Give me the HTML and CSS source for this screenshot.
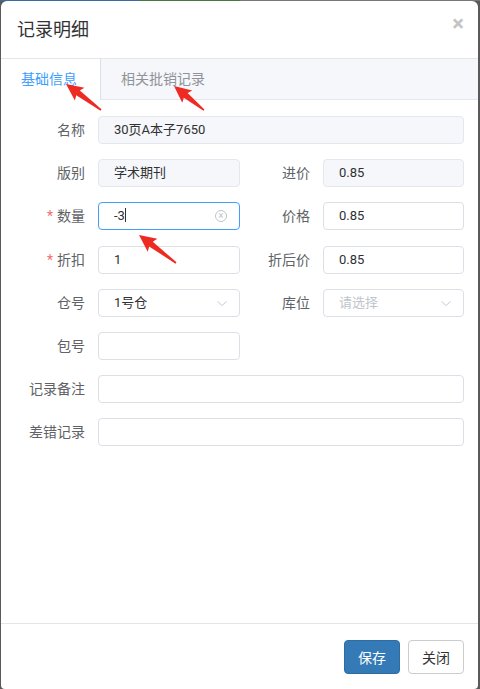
FILE: index.html
```html
<!DOCTYPE html>
<html lang="zh-CN">
<head>
    <meta charset="UTF-8">
    <meta name="viewport" content="width=device-width, initial-scale=1.0">
    <title>记录明细</title>
    <link rel="stylesheet" href="styles.css">
</head>
<body>

<div class="strip">
    <span class="strip-blue"></span>
    <span class="strip-green"></span>
    <span class="strip-grey"></span>
</div>

<div class="modal">
    <div class="modal-header">
        <h4 class="modal-title">记录明细</h4>
        <span class="close">&times;</span>
    </div>

    <div class="tabs">
        <div class="tab active">基础信息</div>
        <div class="tab">相关批销记录</div>
    </div>

    <div class="modal-body">
        <form class="record-form">
            <label class="lbl">名称</label>
            <div class="field disabled wide">30页A本子7650</div>

            <label class="lbl">版别</label>
            <div class="field disabled">学术期刊</div>
            <label class="lbl">进价</label>
            <div class="field disabled">0.85</div>

            <label class="lbl"><i class="req">*</i>数量</label>
            <div class="field focus">-3<span class="caret"></span>
                <span class="clear">&times;</span>
            </div>
            <label class="lbl">价格</label>
            <div class="field">0.85</div>

            <label class="lbl"><i class="req">*</i>折扣</label>
            <div class="field">1</div>
            <label class="lbl">折后价</label>
            <div class="field">0.85</div>

            <label class="lbl">仓号</label>
            <div class="field select">1号仓
                <svg class="chev" viewBox="0 0 12 8"><path d="M1 1.5 L6 6.5 L11 1.5" fill="none" stroke="#c0c4cc" stroke-width="1.1"/></svg>
            </div>
            <label class="lbl">库位</label>
            <div class="field select placeholder">请选择
                <svg class="chev" viewBox="0 0 12 8"><path d="M1 1.5 L6 6.5 L11 1.5" fill="none" stroke="#c0c4cc" stroke-width="1.1"/></svg>
            </div>

            <label class="lbl">包号</label>
            <div class="field"></div>
            <span class="blank"></span>

            <label class="lbl">记录备注</label>
            <div class="field wide"></div>

            <label class="lbl">差错记录</label>
            <div class="field wide"></div>
        </form>
    </div>

    <div class="modal-footer">
        <button class="btn btn-primary" type="button">保存</button>
        <button class="btn btn-default" type="button">关闭</button>
    </div>
</div>

<!-- red annotation arrows drawn on top of the screenshot -->
<svg class="marks" width="480" height="689" viewBox="0 0 480 689">
    <g fill="#ee2b22">
        <path transform="translate(66 84) rotate(36.6)" d="M0 0 L17 -8 L15 -3 L43.6 -0.8 L43.6 0.8 L15 3 L17 8 Z"/>
        <path transform="translate(174 86) rotate(38.7)" d="M0 0 L17 -8 L15 -3 L38.4 -0.8 L38.4 0.8 L15 3 L17 8 Z"/>
        <path transform="translate(139 235) rotate(37.1)" d="M0 0 L17 -8 L15 -3 L46.4 -0.8 L46.4 0.8 L15 3 L17 8 Z"/>
    </g>
</svg>

</body>
</html>
```

FILE: styles.css
```css
body {
    margin: 0;
    background-color: #5a5a5a;
    font-family: Roboto, "Helvetica Neue", "Noto Sans CJK SC", sans-serif;
    position: relative;
    width: 480px;
    height: 689px;
    overflow: hidden;
}
.strip {
    display: flex;
    height: 1px;
}
.strip-blue { width: 140px; background-color: #3d6aa0; }
.strip-green { width: 100px; background-color: #4a7a3a; }
.strip-grey { flex: 1; background-color: #777; }

.modal {
    margin-left: 1px;
    width: 477px;
    height: 688px;
    background-color: #fff;
    border-radius: 6px 6px 4px 4px;
    display: flex;
    flex-direction: column;
}
.modal-header {
    height: 57px;
    border-bottom: 1px solid #e5e5e5;
    display: flex;
    align-items: center;
    justify-content: space-between;
    padding: 0 14px 0 16px;
}
.modal-title {
    margin: 0 0 4px;
    font-size: 18px;
    font-weight: normal;
    color: #333;
}
.close {
    font-size: 22px;
    font-weight: bold;
    color: #c4c4c4;
    margin-top: -12px;
}

.tabs {
    display: flex;
    height: 40px;
    background-color: #f5f7fa;
    border-bottom: 1px solid #e4e7ed;
}
.tab {
    font-size: 14px;
    color: #909399;
    line-height: 40px;
    padding: 0 20px;
}
.tab.active {
    width: 59px;
    background-color: #fff;
    color: #409eff;
    border-right: 1px solid #dcdfe6;
    height: 41px;
}

.modal-body {
    flex: 1;
    padding: 16px 14px 0 0;
}
.record-form {
    display: grid;
    grid-template-columns: 97px 142px 83px 1fr;
    grid-auto-rows: 28px;
    row-gap: 15.2px;
}
.lbl {
    font-size: 14px;
    color: #606266;
    text-align: right;
    line-height: 28px;
    padding-right: 13px;
}
.req {
    font-style: normal;
    color: #f56c6c;
    margin-right: 4px;
}
.field {
    position: relative;
    box-sizing: border-box;
    height: 28px;
    border: 1px solid #dcdfe6;
    border-radius: 4px;
    padding-left: 15px;
    font-size: 13px;
    line-height: 26px;
    color: #303133;
}
.field.wide {
    grid-column: 2 / 5;
}
.field.disabled {
    background-color: #f5f7fa;
    border-color: #e4e7ed;
}
.field.focus {
    border-color: #409eff;
}
.caret {
    display: inline-block;
    width: 1px;
    height: 14px;
    background-color: #303133;
    vertical-align: -2px;
}
.clear {
    position: absolute;
    right: 12px;
    top: 7px;
    box-sizing: border-box;
    width: 12px;
    height: 12px;
    border: 1px solid #c0c4cc;
    border-radius: 50%;
    color: #c0c4cc;
    font-size: 10px;
    line-height: 9px;
    text-align: center;
}
.field.placeholder {
    color: #c0c4cc;
}
.chev {
    position: absolute;
    right: 11px;
    top: 10px;
    width: 12px;
    height: 7px;
}
.blank {
    grid-column: 3 / 5;
}

.modal-footer {
    border-top: 1px solid #e5e5e5;
    padding: 16px 14px 0 0;
    height: 49px;
    display: flex;
    justify-content: flex-end;
    gap: 8px;
}
.btn {
    height: 34px;
    padding: 0 13px;
    font-size: 14px;
    font-family: inherit;
    border-radius: 4px;
    border: 1px solid #ccc;
    background-color: #fff;
    color: #333;
}
.btn-primary {
    background-color: #337ab7;
    border-color: #2e6da4;
    color: #fff;
}

.marks {
    position: absolute;
    left: 0;
    top: 0;
    pointer-events: none;
}
```
